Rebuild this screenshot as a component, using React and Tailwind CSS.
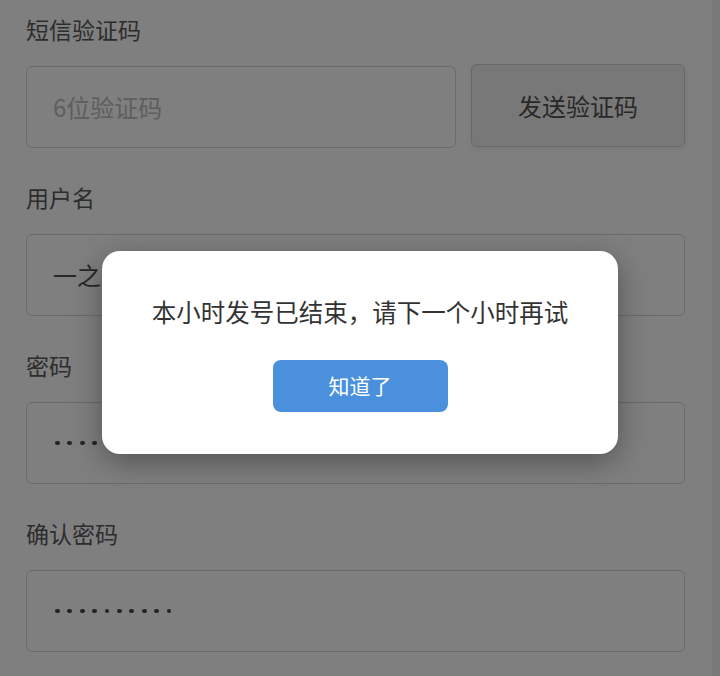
const font = { fontFamily: '"Noto Sans CJK SC", "Noto Sans", sans-serif' };

function Dots({ count }) {
  return (
    <div className="ml-[2px] flex items-center gap-[7.6px]">
      {Array.from({ length: count }).map((_, i) => (
        <span key={i} className="block h-[4.8px] w-[4.8px] rounded-full bg-[#4a4a4a]" />
      ))}
    </div>
  );
}

function Field({ label, children, first }) {
  return (
    <div className={first ? "" : "mt-[40px]"}>
      <div className="-mt-[1px] h-[21px] text-[23px] leading-[21px] text-[#5a5a5a]">{label}</div>
      <div className="mt-[26px]">{children}</div>
    </div>
  );
}

function Box({ children }) {
  return (
    <div className="flex h-[82px] items-center rounded-[6px] border border-[#d6d6d6] bg-white pl-[26px]">
      {children}
    </div>
  );
}

export default function App() {
  return (
    <div className="relative h-[676px] w-[720px] overflow-hidden bg-white" style={font}>
      <div className="flex h-full">
        <div className="w-[712px] pt-[20px] pl-[26px] pr-[27px]">
          <Field label="短信验证码" first>
            <div className="flex items-start gap-[15px]">
              <div className="flex h-[82px] flex-1 items-center rounded-[6px] border border-[#d6d6d6] bg-white pl-[26px] text-[24px] text-[#bcbcbc]">
                6位验证码
              </div>
              <button className="-mt-[2px] flex h-[83px] w-[214px] items-center justify-center rounded-[6px] border border-[#d0d0d0] bg-[#f0f0f0] text-[24px] text-[#505050] shadow-[0_2px_6px_rgba(0,0,0,0.08)]">
                发送验证码
              </button>
            </div>
          </Field>
          <Field label="用户名">
            <Box>
              <span className="text-[24px] text-[#505050]">一之</span>
            </Box>
          </Field>
          <Field label="密码">
            <Box>
              <Dots count={10} />
            </Box>
          </Field>
          <Field label="确认密码">
            <Box>
              <Dots count={10} />
            </Box>
          </Field>
        </div>
        <div className="w-[8px] bg-[#f2eeee]" />
      </div>

      <div className="absolute inset-0 bg-black/50" />

      <div className="absolute left-[102px] top-[251px] flex h-[203px] w-[516px] flex-col items-center rounded-[18px] bg-white shadow-[0_8px_30px_rgba(0,0,0,0.35)]">
        <div className="mt-[46px] text-[24.5px] leading-[30px] text-[#333]">
          本小时发号已结束，请下一个小时再试
        </div>
        <button className="mt-[33px] flex h-[52px] w-[175px] items-center justify-center rounded-[8px] bg-[#4a90dc] text-[21px] text-white">
          知道了
        </button>
      </div>
    </div>
  );
}
